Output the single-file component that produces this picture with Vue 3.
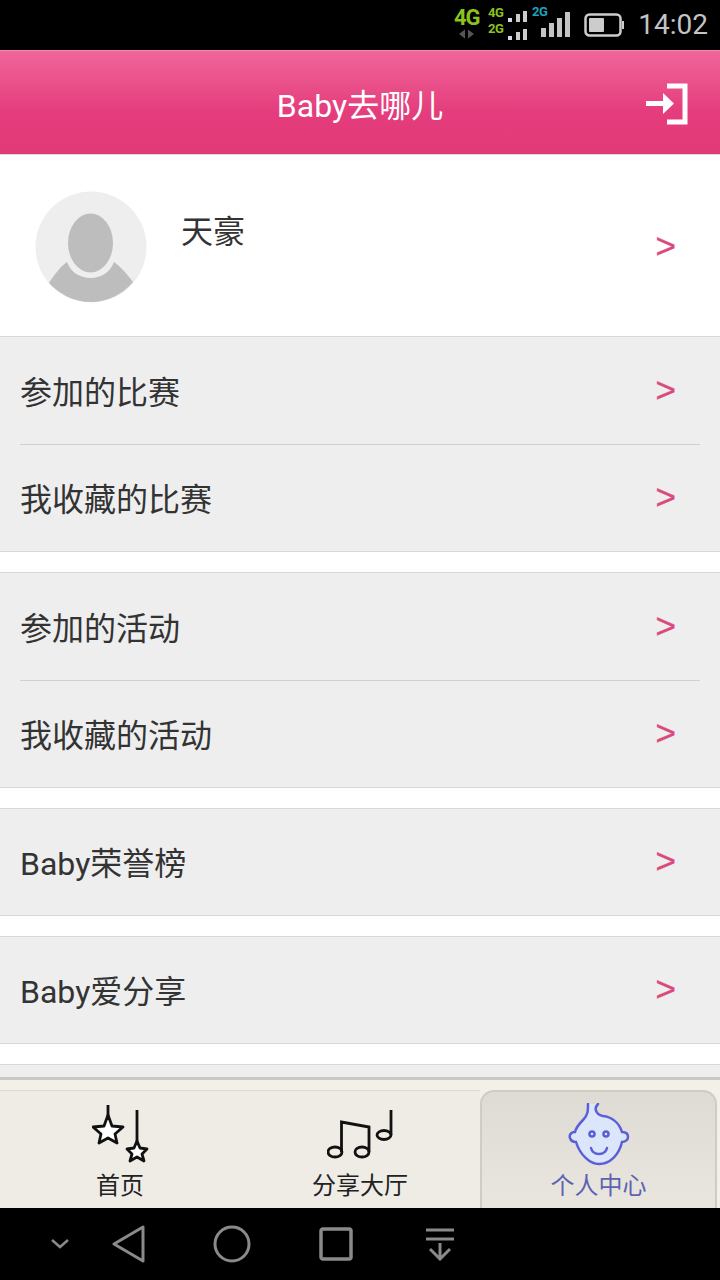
<script setup>
const groups = [
  ['参加的比赛', '我收藏的比赛'],
  ['参加的活动', '我收藏的活动'],
  ['Baby荣誉榜'],
  ['Baby爱分享'],
]
</script>

<template>
  <div class="page">
    <div class="status">
      <div class="net">
        <span class="big4g">4G</span>
        <svg class="updown" width="16" height="10" viewBox="0 0 16 10"><path d="M0 5L6 0.500V9.500z M9 0.500L15 5L9 9.500z" fill="#555" /></svg>
      </div>
      <div class="sims">
        <span>4G</span>
        <span>2G</span>
      </div>
      <svg class="minibars" width="20" height="30" viewBox="0 0 20 30">
        <g fill="#d8d8e8">
          <rect x="0" y="8" width="4" height="4" />
          <rect x="0" y="26" width="4" height="4" />
        </g>
        <g fill="#ccc">
          <rect x="8" y="4" width="4" height="8" />
          <rect x="15" y="1" width="4" height="11" />
          <rect x="8" y="22" width="4" height="8" />
          <rect x="15" y="19" width="4" height="11" />
        </g>
      </svg>
      <span class="cyan2g">2G</span>
      <svg class="bars" width="30" height="26" viewBox="0 0 30 26" fill="#c4c4c4">
        <rect x="0" y="16" width="5" height="9" />
        <rect x="8" y="11" width="5" height="14" />
        <rect x="16" y="6" width="5" height="19" />
        <rect x="24" y="0" width="5" height="25" />
      </svg>
      <svg class="battery" width="40" height="24" viewBox="0 0 40 24">
        <rect x="1.500" y="1.500" width="35" height="21" rx="4" fill="none" stroke="#ccc" stroke-width="2.500" />
        <rect x="5" y="5" width="15" height="14" rx="1" fill="#ccc" />
        <rect x="38" y="8" width="2" height="8" fill="#ccc" />
      </svg>
      <span class="time">14:02</span>
    </div>

    <header class="header">
      <span class="title">Baby去哪儿</span>
      <svg class="logout" width="44" height="44" viewBox="0 0 44 44" fill="none" stroke="#fff" stroke-width="5">
        <path d="M22 4H40V40H22" />
        <path d="M1 21.500H22" />
        <path d="M18 11L29 21.500L18 32z" fill="#fff" stroke="none" />
      </svg>
    </header>

    <main class="content">
      <section class="profile">
        <svg class="avatar" width="112" height="112" viewBox="0 0 112 112">
          <circle cx="56" cy="56" r="55.500" fill="#eeeeee" />
          <path d="M14 92C19 84 25 76 32 71C36 82 46 87 55.500 87C65 87 75 82 79 71C86 76 93 84 98 91C88 103 73 111 56 111C39 111 24 103 14 92z" fill="#bdbdbd" />
          <ellipse cx="55.500" cy="52" rx="22.500" ry="29.500" fill="#bdbdbd" />
        </svg>
        <span class="name">天豪</span>
        <span class="arrow profile-arrow">&gt;</span>
      </section>

      <section v-for="(group, g) in groups" :key="g" class="group">
        <div v-for="item in group" :key="item" class="row" :class="{ single: group.length === 1 }">
          <span>{{ item }}</span>
          <span class="arrow">&gt;</span>
        </div>
      </section>
      <div class="last-line"></div>
    </main>

    <nav class="tabbar">
      <div class="tab">
        <svg class="stars" width="57" height="60" viewBox="0 0 57 60" fill="#fff" stroke="#111" stroke-width="2.800" stroke-linejoin="round">
          <path d="M16 0V12" fill="none" />
          <path d="M16 10L20 21L31 22L23 29L25 38L16 33L7 38L9 29L1 22L12 21z" />
          <path d="M45 5V37" fill="none" />
          <path d="M45 36L48 43L55 44L50 49L52 56L45 52L38 56L40 49L35 44L42 43z" />
        </svg>
        <span>首页</span>
      </div>
      <div class="tab">
        <svg class="notes" width="67" height="50" viewBox="0 0 67 50" fill="none" stroke="#111" stroke-width="2.800">
          <path d="M14.500 43V13L42 18V43" />
          <ellipse cx="8" cy="43" rx="7" ry="5" />
          <ellipse cx="35" cy="43" rx="7" ry="5" />
          <ellipse cx="57" cy="26" rx="7" ry="4.500" />
          <path d="M64 26V1" />
        </svg>
        <span>分享大厅</span>
      </div>
      <div class="tab active">
        <svg width="62" height="64" viewBox="0 0 62 64" fill="#dce6fa" stroke="#5a5fd8" stroke-width="2.500" stroke-linecap="round">
          <path d="M20 1C20 8 20 12 15 17C11 21 8 25 7 29C3 29 1 32 2 35C3 38 5 39 8 39C12 52 22 61 31 61C42 61 51 52 54 39C57 39 60 37 60 34C60 31 58 29 54 29C51 19 43 14 35 13C29 12 25 6 30 1" />
          <circle cx="24" cy="31" r="2.500" fill="none" />
          <circle cx="38" cy="31" r="2.500" fill="none" />
          <path d="M23 45C25 53 37 53 39 45" fill="none" />
        </svg>
        <span>个人中心</span>
      </div>
    </nav>

    <footer class="navbar">
      <svg width="18" height="10" viewBox="0 0 18 10" fill="none" stroke="#8a8a8a" stroke-width="2.500"><path d="M1 1L9 8L17 1" /></svg>
      <svg class="back" width="34" height="38" viewBox="0 0 34 38" fill="none" stroke="#8a8a8a" stroke-width="3" stroke-linejoin="round"><path d="M31 2V36L2 19z" /></svg>
      <svg class="home" width="38" height="38" viewBox="0 0 38 38" fill="none" stroke="#8a8a8a" stroke-width="3"><circle cx="19" cy="19" r="17" /></svg>
      <svg class="recent" width="34" height="34" viewBox="0 0 34 34" fill="none" stroke="#8a8a8a" stroke-width="3.500"><rect x="2" y="2" width="30" height="30" rx="2" /></svg>
      <svg class="pull" width="30" height="34" viewBox="0 0 30 34" fill="none" stroke="#8a8a8a" stroke-width="3"><path d="M1 3H29M1 12H29M15 16V32M5 22L15 32L25 22" /></svg>
    </footer>
  </div>
</template>

<style scoped>
.page {
  width: 720px;
  height: 1280px;
  display: flex;
  flex-direction: column;
  overflow: hidden;
  background: #fff;
  font-family: "Roboto", "Noto Sans CJK SC", sans-serif;
  color: #333;
}

.status {
  height: 50px;
  flex: none;
  background: #000;
  display: flex;
  align-items: center;
  justify-content: flex-end;
  padding-right: 12px;
  box-sizing: border-box;
  position: relative;
}
.net {
  position: absolute;
  left: 454px;
  top: 6px;
  display: flex;
  flex-direction: column;
  align-items: center;
}
.big4g {
  color: #8cc21f;
  font-size: 22px;
  font-weight: 700;
  line-height: 24px;
  letter-spacing: -1px;
}
.updown {
  margin-top: -1px;
}
.sims {
  position: absolute;
  left: 488px;
  top: 5px;
  display: flex;
  flex-direction: column;
  color: #8cc21f;
  font-size: 13px;
  font-weight: 700;
  line-height: 16px;
  letter-spacing: -0.5px;
}
.minibars {
  position: absolute;
  left: 508px;
  top: 10px;
}
.cyan2g {
  position: absolute;
  left: 532px;
  top: 4px;
  color: #1fa3b8;
  font-size: 13px;
  font-weight: 700;
  line-height: 16px;
  letter-spacing: -0.5px;
}
.bars {
  position: absolute;
  left: 541px;
  top: 12px;
}
.battery {
  position: absolute;
  left: 584px;
  top: 13px;
}
.time {
  color: #c4c4c4;
  font-size: 28px;
  line-height: 50px;
}

.header {
  height: 105px;
  flex: none;
  box-sizing: border-box;
  background: linear-gradient(#f0669a, #e43c7c 60%, #e23a78);
  border-top: 1px solid #f48ab2;
  border-bottom: 1px solid #d9d9d9;
  display: flex;
  align-items: center;
  justify-content: center;
  position: relative;
}
.title {
  color: #fff;
  font-size: 32px;
}
.logout {
  position: absolute;
  right: 31px;
  top: 31px;
}

.content {
  flex: 1;
  min-height: 0;
  overflow: hidden;
}
.profile {
  height: 181px;
  box-sizing: border-box;
  display: flex;
  padding: 36px 44px 0 35px;
}
.avatar {
  flex: none;
}
.name {
  margin-left: 34px;
  margin-top: 19px;
  font-size: 32px;
  line-height: 44px;
}
.arrow {
  color: #d9487e;
  font-family: "Liberation Sans", sans-serif;
  font-size: 35px;
  line-height: 40px;
  -webkit-text-stroke: 0.4px #d9487e;
}
.profile-arrow {
  margin-left: auto;
  margin-top: 35px;
}
.group {
  background: #eeeeee;
  border-top: 1px solid #d8d8d8;
  border-bottom: 1px solid #d8d8d8;
  margin-bottom: 20px;
}
.row {
  height: 107px;
  margin-left: 20px;
  margin-right: 20px;
  padding: 0 24px 2px 0;
  box-sizing: border-box;
  display: flex;
  align-items: center;
  justify-content: space-between;
  font-size: 32px;
}
.row.single {
  height: 106px;
}
.row + .row {
  border-top: 1px solid #d0d0d0;
}
.last-line {
  border-top: 1px solid #d8d8d8;
  height: 14px;
  background: #eeeeee;
}

.tabbar {
  height: 131px;
  flex: none;
  box-sizing: border-box;
  padding-top: 10px;
  display: grid;
  grid-template-columns: 240px 240px 237px;
  background: #f3f1e7;
  border-top: 3px solid #c8c8c4;
}
.tab {
  display: flex;
  flex-direction: column;
  align-items: center;
  justify-content: flex-end;
  padding-bottom: 5px;
  background: #efece6;
  border-top: 1px solid #dcdad2;
  color: #222;
  font-size: 24px;
  line-height: 34px;
}
.tab svg {
  margin-bottom: 4px;
}
.tab .notes {
  margin-bottom: 10px;
}
.active {
  background: linear-gradient(#dedbd4, #e9e6e0);
  border-radius: 14px 14px 0 0;
  border: 2px solid #cfccc6;
  border-bottom: 0;
  color: #5e62b0;
}
.active svg {
  margin-bottom: 2px;
}
.navbar {
  height: 72px;
  flex: none;
  background: #000;
  display: flex;
  align-items: center;
  padding-left: 51px;
}
.back {
  margin-left: 43px;
}
.home {
  margin-left: 67px;
}
.recent {
  margin-left: 68px;
}
.pull {
  margin-left: 72px;
}
</style>
